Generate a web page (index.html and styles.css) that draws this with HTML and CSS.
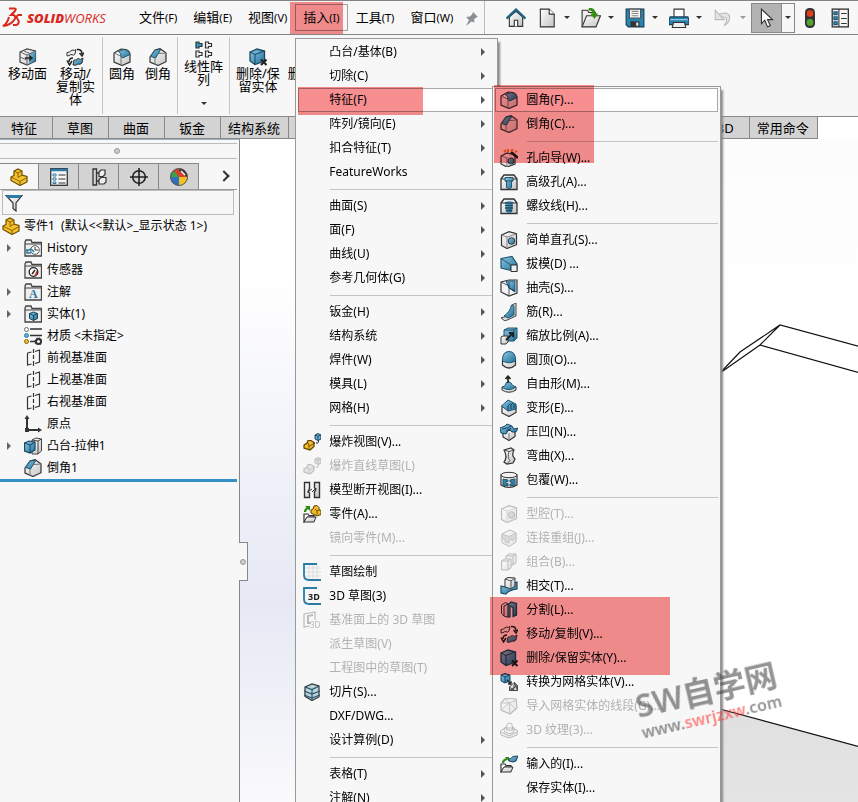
FILE: index.html
```
<!DOCTYPE html>
<html lang="zh-CN">
<head>
    <meta charset="UTF-8">
    <meta name="viewport" content="width=device-width, initial-scale=1.0">
    <title>SOLIDWORKS</title>
    <link rel="stylesheet" href="styles.css">
</head>
<body>

    <!-- Icon set -->
    <svg class="icon-set" aria-hidden="true">
        <defs>
            <linearGradient id="blue" x1="0" y1="0" x2="1" y2="1"><stop offset="0" stop-color="#8cc8e4"/><stop offset="1" stop-color="#1f6f99"/></linearGradient>
            <linearGradient id="grey" x1="0" y1="0" x2="1" y2="1"><stop offset="0" stop-color="#ffffff"/><stop offset="1" stop-color="#c4c4c4"/></linearGradient>
            <linearGradient id="face" x1="0" y1="0" x2="0" y2="1"><stop offset="0" stop-color="#e0e0e0"/><stop offset="1" stop-color="#f4f4f4"/></linearGradient>
        </defs>
        <symbol id="fillet" viewBox="0 0 18 18"><path d="M1 5 8 1 13 1.500Q17 3 17 7v7L9 17.500 1 14z" fill="url(#grey)" stroke="#333" stroke-width="1.200"/><path d="M1 5l7 3.200V17" fill="none" stroke="#777"/><path d="M8 8.500Q8.500 5 5.500 3.500L11 1.500Q16.500 2.500 17 6.500L9.500 10z" fill="url(#blue)" stroke="#23566f"/></symbol>
        <symbol id="chamfer" viewBox="0 0 18 18"><path d="M1 9 6 2 11 .700l6 4v9L9 17.500 1 14z" fill="url(#grey)" stroke="#333" stroke-width="1.200"/><path d="M6 10v7M10 5.500 17 5" fill="none" stroke="#777"/><path d="M1.500 8.500 6 2 12 1.200 6.500 10z" fill="url(#blue)" stroke="#23566f"/></symbol>
        <symbol id="box-hole" viewBox="0 0 18 18"><path d="M1.500 4 9 .700l7.500 2v11L7 17.500l-5.500-3z" fill="url(#grey)" stroke="#333" stroke-width="1.200"/><path d="M1.500 4 7 6l9.500-3M7 6v11" fill="none" stroke="#888"/><circle cx="11.500" cy="10" r="3.300" fill="url(#blue)" stroke="#333"/></symbol>
        <symbol id="hole-wizard" viewBox="0 0 18 18"><path d="M1 7l6-3 8 2v9l-8 3-6-3z" fill="url(#grey)" stroke="#333" stroke-width="1.200"/><path d="M1 7l6 2v9" fill="none" stroke="#777"/><circle cx="11" cy="12" r="3" fill="url(#blue)" stroke="#333"/><path d="M11 3l7 6" stroke="#222" stroke-width="2.600"/><path d="M4 3l2-2M8 3V0M11 2l2-2M15 3l2-1" stroke="#e88416" stroke-width="2"/></symbol>
        <symbol id="adv-hole" viewBox="0 0 18 18"><path d="M1 6 4 2h10l3 4v10.500H1z" fill="url(#grey)" stroke="#333" stroke-width="1.300"/><path d="M1 6h16" stroke="#333"/><path d="M5 4.500h8V8h-1.500v6.500L9 16l-2.500-1.500V8H5z" fill="url(#blue)" stroke="#23566f"/><path d="M5 8h8" stroke="#23566f"/></symbol>
        <symbol id="thread" viewBox="0 0 18 18"><path d="M1 6 4 2h10l3 4v10.500H1z" fill="url(#grey)" stroke="#333" stroke-width="1.300"/><path d="M1 6h16" stroke="#333"/><rect x="5.500" y="4" width="7" height="12" rx="3" fill="url(#blue)"/><path d="M5 6h8M5 8.500h8M5 11h8M6 13.500h6" stroke="#1b475e" stroke-width="1.300"/></symbol>
        <symbol id="draft" viewBox="0 0 18 18"><path d="M1 3.500 12 1.500 17 9v7H13L1 13z" fill="url(#blue)" stroke="#23566f" stroke-width="1.200"/><path d="M1 3.500 11 10h6M11 10v6" fill="none" stroke="#23566f"/><path d="M11 10h6v6.500h-6z" fill="#eee" stroke="#333"/></symbol>
        <symbol id="shell" viewBox="0 0 18 18"><path d="M1 3 9 1h8v13l-8 3-8-4z" fill="#f4f4f4" stroke="#333" stroke-width="1.200"/><path d="M6 2h9v11L9 9z" fill="url(#blue)" stroke="#23566f"/><path d="M1 3l8 4v10" fill="none" stroke="#555"/><path d="M9 3v6l6 3" fill="none" stroke="#16455d"/></symbol>
        <symbol id="rib" viewBox="0 0 18 18"><path d="M12 2l4-2v13L5 18l-4-3 9-3z" fill="url(#grey)" stroke="#444"/><path d="M4 13Q10 9 11.500 2L14 3v9l-6 3z" fill="url(#blue)" stroke="#23566f"/></symbol>
        <symbol id="scale" viewBox="0 0 18 18"><path d="M4 3 8 1h9v10l-3 3H4z" fill="url(#blue)" stroke="#23566f"/><path d="M4 3h10v11M14 3l3-2" fill="none" stroke="#23566f"/><path d="M1 10l2-1h5v6l-2 2H1z" fill="url(#grey)" stroke="#333"/><path d="M6 13l6-6M9 6h4v4" fill="none" stroke="#222" stroke-width="2"/></symbol>
        <symbol id="dome" viewBox="0 0 18 18"><path d="M2.500 9v5Q9 20 15.500 14V9z" fill="url(#grey)" stroke="#333" stroke-width="1.200"/><path d="M2.500 10Q2 .500 9 .500t6.500 9.500Q9 13.500 2.500 10z" fill="url(#blue)" stroke="#23566f"/></symbol>
        <symbol id="freeform" viewBox="0 0 18 18"><path d="M2 12v3Q9 19.500 16 15v-3z" fill="url(#grey)" stroke="#333"/><path d="M2 12.500Q6 11 6 8q3-3 5 0 1 3 5 4Q9 17 2 12.500z" fill="url(#blue)" stroke="#23566f"/><path d="M8 8V1M5.500 4 8 1.200 10.500 4" fill="none" stroke="#222" stroke-width="1.700"/></symbol>
        <symbol id="deform" viewBox="0 0 18 18"><path d="M2 7v7l7 3.500 7-4V7z" fill="url(#grey)" stroke="#333" stroke-width="1.200"/><path d="M1.500 7 8 1l8 4v5L8 12z" fill="url(#blue)" stroke="#23566f"/><path d="M8 12V7l3-3M11 10V6l2-2M14 9V5" fill="none" stroke="#16455d"/></symbol>
        <symbol id="indent" viewBox="0 0 18 18"><path d="M3 8v6l6 3.500 6-4V7z" fill="url(#grey)" stroke="#333" stroke-width="1.200"/><path d="M9 10v7" stroke="#777"/><path d="M0 5l5-2 2-2 5 2 2 3 4-1-2 4-4 0-3-3-3 5-5-1z" fill="url(#blue)" stroke="#1b475e"/><path d="M2 6l5-1 4-2M6 8l5-3" stroke="#16455d" fill="none"/></symbol>
        <symbol id="flex" viewBox="0 0 18 18"><path d="M4 3l7-2 3 2q-3 5 1 9l-2 4-6 1-3-2q4-5 0-12z" fill="url(#grey)" stroke="#333" stroke-width="1.200"/><path d="M4 3l5 1.500L14 3M9 4.500q-2 6 1 9L7 17" fill="none" stroke="#555"/></symbol>
        <symbol id="wrap" viewBox="0 0 18 18"><path d="M1 4v10q8 5 16 0V4z" fill="url(#grey)" stroke="#333" stroke-width="1.200"/><ellipse cx="9" cy="4" rx="8" ry="2.700" fill="#f2f2f2" stroke="#333"/><path d="M3 8l5 1v1.500H6v2h2V15l-5-1zM10 9l5-1v6l-5 1v-2h2v-2h-2z" fill="#2f85b3" stroke="#23566f"/></symbol>
        <symbol id="join" viewBox="0 0 18 18"><path d="M2 5l8-4 6 3v9l-7 4.500-7-4z" fill="url(#grey)" stroke="#333"/><path d="M2 9l3 2v2l4 1v-3l3-1v2l4-3V4L9 7.500 2 5z" fill="#999" stroke="#555"/></symbol>
        <symbol id="combine" viewBox="0 0 18 18"><path d="M6 3l3-2h7v9l-3 2H6z" fill="url(#grey)" stroke="#333"/><path d="M1.500 8l3-2H11v9l-3 2H1.500z" fill="url(#grey)" stroke="#333"/><path d="M1.500 8H8v9M8 8l3-2M6 3h7v9M13 3l3-2" fill="none" stroke="#333"/></symbol>
        <symbol id="intersect" viewBox="0 0 18 18"><path d="M1 9l5 1q5-4 11-5v7Q9 13 6 17l-5-1z" fill="url(#blue)" stroke="#1b475e" stroke-width="1.200"/><path d="M5 2l3-1.500L15 1v8l-4 3-6-2z" fill="url(#grey)" stroke="#333"/><path d="M5 2l6 2v8M11 4l4-3" fill="none" stroke="#555"/></symbol>
        <symbol id="split" viewBox="0 0 18 18"><path d="M1.500 4l4-2.500 3 1.500v13l-4-.5-3-3z" fill="url(#grey)" stroke="#333"/><path d="M4 5l4.500-2M4 5v10" stroke="#333"/><path d="M8 4l3-3 5.500 1.500V14L13 15.500v-9L10 5v11H8z" fill="url(#blue)" stroke="#1b475e" stroke-width="1.200"/></symbol>
        <symbol id="move-copy" viewBox="0 0 18 18"><path d="M1 4.500q3 0 5-2.500 3 1 4-.5L9 6Q8 8 5 6.500 3 8 1 8z" fill="#eee" stroke="#333"/><path d="M8 12q2 1 4-1.500 2 2 5-.5l-1 5q-2 2-4 1-2 2-5 1z" fill="url(#blue)" stroke="#333"/><path d="M11 1.500Q16 1 16 6M13.500 5 16 8l2-3.500M7 10Q3 10 3 14M1 12.500 3.500 17 6 13" fill="none" stroke="#222" stroke-width="1.500"/></symbol>
        <symbol id="delete-body" viewBox="0 0 18 18"><path d="M1 4 8 1l7.500 2v10L6 16.500 1 13z" fill="url(#blue)" stroke="#1b475e" stroke-width="1.300"/><path d="M1 4l5 2.500 9.500-3.500M6 6.500v10" fill="none" stroke="#1b475e"/><path d="M12 11.500l5.500 5.500M17.500 11.500 12 17" stroke="#222" stroke-width="2"/></symbol>
        <symbol id="to-mesh" viewBox="0 0 18 18"><path d="M1 2 5 .500 10 2v6L5 10 1 8z" fill="url(#blue)" stroke="#1b475e"/><path d="M1 2l4 2v6M5 4l5-2" fill="none" stroke="#1b475e"/><path d="M7 7l4 4M11 8v3H8" stroke="#222" fill="none" stroke-width="1.300"/><path d="M9.500 14 14 9.500l3.500 3v5h-8zM9.500 14l4 3.500 1-8 3 8M9.500 17.500l8-5" fill="#ddd" stroke="#444"/></symbol>
        <symbol id="mesh-seg" viewBox="0 0 18 18"><path d="M1 6 5 1.500 16 2l1 9-7 6-9-4z" fill="url(#grey)" stroke="#333" stroke-width="1.200"/><path d="M1 6h8l8-3M9 6l1 11M5 1.500 9 6l7 6M1 13l8-7" fill="none" stroke="#555"/></symbol>
        <symbol id="texture" viewBox="0 0 18 18"><path d="M0 10l5-3h8l5 3-1 4-8 3-8-3z" fill="url(#grey)" stroke="#333"/><path d="M4 9q0-3 2.500-3 0-4 3-4t3 4Q15 6 14 9q0 3-2.500 3Q9 14 7 12 4 12 4 9zM6.500 6v3h6V6M1 11l8 4 8-4" fill="none" stroke="#333"/></symbol>
        <symbol id="imported" viewBox="0 0 18 18"><path d="M1 17V9h4l1 1.500h5V12H4.500z" fill="#fff" stroke="#333" stroke-width="1.200"/><path d="M1 17l3-5h9l-2 5z" fill="url(#grey)" stroke="#333"/><path d="M3 8Q3 5 7 4" fill="none" stroke="#2f8a12" stroke-width="2.200"/><path d="M5 2h4v4.500z" fill="#2f8a12"/><path d="M9 4q2 0 4-2.500l5-.5-2 5-3 1-4-1z" fill="url(#blue)" stroke="#1b475e"/></symbol>
        <symbol id="part" viewBox="0 0 18 18"><path d="M1 9l3-1.500V3L8 1l4 2v4l5 1.500V14l-7 3.500-9-5z" fill="#f3c12c" stroke="#6d4c00" stroke-width="1.200"/><path d="M4 3l4 2 4-2M8 5v4.500L12 7M1 9l9 4.500 7-4M10 13.500v4" fill="none" stroke="#8a6203"/></symbol>
        <symbol id="explode" viewBox="0 0 18 18"><path d="M1 12l3-2 1-2.500h3l3 2v4L7 17l-6-2z" fill="#f0b92a" stroke="#5c4000" stroke-width="1.200"/><path d="M5 10l1 3 5-2M6 13v3" fill="none" stroke="#7d5700"/><path d="M12 2l3-1.500 3 1.500v4l-3 1.500-3-1.500zM12 2l3 1 3-1M15 3v4" fill="#63b3d6" stroke="#1b475e"/><path d="M10 10h5.500V7" fill="none" stroke="#222" stroke-dasharray="2 1"/></symbol>
        <symbol id="break-view" viewBox="0 0 18 18"><path d="M1.500 1.500h5v6L5 11l1.500 1v4.500h-5zM16.500 1.500h-5V7L13 8l-1.500 3v5.500h5z" fill="url(#grey)" stroke="#333" stroke-width="1.400"/><path d="M5 11l4-3M9 11l3-3" stroke="#333"/></symbol>
        <symbol id="insert-part" viewBox="0 0 18 18"><path d="M1 17V9h4l1 1.500h5V12H4.500z" fill="#fff" stroke="#333" stroke-width="1.200"/><path d="M1 17l3-5h9l-2 5z" fill="url(#grey)" stroke="#333"/><path d="M2 7Q2 4 5 3" fill="none" stroke="#2f8a12" stroke-width="2.200"/><path d="M2 1h5v5z" fill="#2f8a12"/><path d="M8 5l2-1 1-3 3-.5 2 2v2l2 1v4l-4 1.500L8 8z" fill="#f0b92a" stroke="#5c4000"/><path d="M12 4l2 2 3-1M14 6v4" fill="none" stroke="#7d5700"/></symbol>
        <symbol id="sketch" viewBox="0 0 18 18"><path d="M6 2v15M10 1v16M14 1v16M2 5h16M2 9h16M2 13h16" stroke="#ddd"/><path d="M14 1H1v11q0 5 5 5h12" fill="none" stroke="#2a7ba5" stroke-width="1.800"/></symbol>
        <symbol id="slicing" viewBox="0 0 18 18"><path d="M2 4l7-3 7 2v11l-7 3.500-7-4z" fill="#b9d4df" stroke="#333" stroke-width="1.200"/><path d="M2 4l7 2.500L16 3M9 6.500v11M1 8l8 3 8-3M1 12l8 3 8-3" fill="none" stroke="#285469" stroke-width="1.200"/></symbol>
        <symbol id="folder" viewBox="0 0 18 18"><path d="M1 17V3l1-2h5l1 2.500h9.500V17z" fill="#eee" stroke="#444" stroke-width="1.300"/><path d="M1 5h16" stroke="#444"/></symbol>
        <symbol id="folder-history" viewBox="0 0 18 18"><use href="#folder"/><circle cx="11" cy="11" r="4.300" fill="#fff" stroke="#555"/><path d="M11 8v3h3" fill="none" stroke="#333"/><path d="M4 12q3-4 6 1M3 10v4h4" fill="none" stroke="#2a7ba5" stroke-width="1.500"/></symbol>
        <symbol id="folder-sensor" viewBox="0 0 18 18"><use href="#folder"/><circle cx="9.500" cy="11" r="4.300" fill="#fff" stroke="#222" stroke-width="1.300"/><path d="M8 13l3-4" stroke="#222" stroke-width="1.400"/><path d="M13 9v5l-3 1z" fill="#d93a20"/></symbol>
        <symbol id="folder-solid" viewBox="0 0 18 18"><use href="#folder"/><path d="M5.500 8.500l4-1.500 4 1.500v5l-4 2-4-2z" fill="url(#blue)" stroke="#16455d"/><path d="M5.500 8.500l4 2 4-2M9.500 10.500v5" fill="none" stroke="#16455d"/></symbol>
        <symbol id="material" viewBox="0 0 18 18"><path d="M6 2h12M6 8.500h12M6 14.500h6" stroke="#333" stroke-width="1.500"/><circle cx="2.500" cy="2.500" r="2" fill="#fff" stroke="#666"/><circle cx="2.500" cy="8.500" r="2" fill="#63b3d6" stroke="#2a7ba5"/><circle cx="2.500" cy="14.500" r="2" fill="#f3c12c" stroke="#8a6203"/><circle cx="14.500" cy="14.500" r="2.500" fill="none" stroke="#333" stroke-width="2"/><circle cx="14.500" cy="14.500" r="3.700" fill="none" stroke="#333" stroke-dasharray="1.500 1.400"/></symbol>
        <symbol id="plane" viewBox="0 0 18 18"><path d="M3.500 4v12l4-1M3.500 4l4-1M11 2.500 15.500 1v12L11 14.500M9.500 0v4M9.500 6v4M9.500 12v5" fill="none" stroke="#333" stroke-width="1.200"/></symbol>
        <symbol id="origin" viewBox="0 0 18 18"><path d="M3 2v13h13" fill="none" stroke="#333" stroke-width="2"/><path d="M.500 4 3 0l2.500 4zM14 12.500l4 2.500-4 2.500z" fill="#333"/><rect x="1" y="13" width="4" height="4" fill="#333"/></symbol>
        <symbol id="extrude" viewBox="0 0 18 18"><path d="M8 3l4-2 5.500 1v12L14 17H8z" fill="url(#grey)" stroke="#444"/><path d="M14 4v13M8 3l6 1 3.500-2" fill="none" stroke="#444"/><path d="M.500 6 5 4l6 1v8l-5 3-5.500-2z" fill="url(#blue)" stroke="#1b475e" stroke-width="1.200"/><path d="M.500 6 6 8l5-3M6 8v8" fill="none" stroke="#1b475e"/></symbol>
        <symbol id="properties" viewBox="0 0 18 18"><rect x=".700" y=".700" width="16.600" height="16.600" fill="#f5f5f5" stroke="#333" stroke-width="1.300"/><path d="M.500 2h17" stroke="#2a7ba5" stroke-width="2.500"/><path d="M3 6h3v2H3zM3 10h3v2H3zM3 14h3v1.500H3z" fill="#fff" stroke="#2a7ba5"/><path d="M8.500 7h7M8.500 11h7M8.500 15h7" stroke="#333"/></symbol>
        <symbol id="config" viewBox="0 0 18 18"><path d="M3 1h3.500v16H3zM6.500 5H9M6.500 13H9" fill="none" stroke="#333" stroke-width="1.300"/><path d="M9 4l2-2h4v4.500l-2 2H9zM9 11.500l2-2h5V14l-2 2H9z" fill="#eee" stroke="#333" stroke-width="1.200"/></symbol>
        <symbol id="target" viewBox="0 0 18 18"><circle cx="9" cy="9" r="6.300" fill="none" stroke="#222" stroke-width="1.600"/><path d="M9 0v18M0 9h18" stroke="#222" stroke-width="1.600"/></symbol>
        <symbol id="ball" viewBox="0 0 18 18"><circle cx="9" cy="9" r="8.500" fill="#d8402f"/><path d="M.500 9Q0 5 3.500 2.500L9 9z" fill="#3ca34a"/><path d="M.500 9H9v8.500Q1 17 .500 9z" fill="#2f6fc0"/><path d="M9 9h8.500Q17 17 9 17.500z" fill="#f0c325"/><path d="M10 .500Q17 2 17.500 9L9 3z" fill="#3a3432"/><path d="M11 3l4 4" stroke="#fff" stroke-width="1.500"/><circle cx="9" cy="9" r="8.500" fill="none" stroke="#555"/></symbol>
        <symbol id="funnel" viewBox="0 0 18 18"><path d="M1 1.500h16L11 9v8l-3-2.500V9z" fill="url(#grey)" stroke="#333" stroke-width="1.200"/><path d="M1 1h16l-2 3H3z" fill="#2a7ba5"/></symbol>
        <symbol id="move-face" viewBox="0 0 18 18"><path d="M1 4l7-3 8.500 2v10L8 17l-7-3z" fill="url(#grey)" stroke="#444" stroke-width="1.200"/><path d="M10 6l6.500-3v10L10 16z" fill="url(#blue)"/><path d="M1 4l7 3 8.500-4M8 7v10M5 3l7 3M1 9l7 3" fill="none" stroke="#666"/><path d="M6 10h6M10 7.500l3 2.500-3 2.500" fill="none" stroke="#222" stroke-width="1.500"/></symbol>
        <symbol id="pattern" viewBox="0 0 18 18"><g fill="#eee" stroke="#333" stroke-width="1.200"><path d="M1 1h3v1.500h3v3H4V7H1z" fill="#2f9cc8"/><path d="M10.500 1h3v1.500h3v3h-3V7h-3zM1 10h3v1.500h3v3H4V16H1zM10.500 10h3v1.500h3v3h-3V16h-3z"/></g></symbol>
        <symbol id="pin" viewBox="0 0 18 18"><path d="M10 3l5 5-2 .500-2 2 .500 3-3-1L3 17l3-6-3-3 4-.500 2-2z" fill="#8b8f92"/></symbol>
        <symbol id="home" viewBox="0 0 18 18"><path d="M3 8v8.500h12V8L9 3z" fill="url(#grey)" stroke="#333"/><path d="M7.500 16.500V11h3v5.500" fill="#fff" stroke="#333"/><path d="M.500 9.500 9 1.500l8.500 8" fill="none" stroke="#1f5f80" stroke-width="2.200"/></symbol>
        <symbol id="new" viewBox="0 0 18 18"><path d="M3 1h8l4.500 4.500V17H3z" fill="url(#grey)" stroke="#333"/><path d="M11 1v4.500h4.500" fill="#fff" stroke="#333"/></symbol>
        <symbol id="open" viewBox="0 0 18 18"><path d="M1 17V2h5l1 2h6v4" fill="#eee" stroke="#333"/><path d="M1 17 5 7h12.500l-4 10z" fill="url(#grey)" stroke="#333"/><path d="M7 1q5 0 5 5" fill="none" stroke="#388e0e" stroke-width="2.600"/><path d="M8.500 5h7L12 10z" fill="#388e0e"/></symbol>
        <symbol id="save" viewBox="0 0 18 18"><path d="M1 1h16v16H3l-2-2z" fill="#2a82ae" stroke="#173f55"/><path d="M4 1h10v8H4z" fill="#f3f3f3" stroke="#555"/><path d="M6 3h6M6 5h6M6 7h6" stroke="#888"/><path d="M5 12h8v5H5z" fill="#333"/><path d="M10 13h2v3h-2z" fill="#ddd"/></symbol>
        <symbol id="print" viewBox="0 0 18 18"><path d="M4.500 8V1h9v7" fill="#fff" stroke="#333"/><path d="M1 8h16l1 3v4H0v-4z" fill="#2a82ae" stroke="#173f55"/><path d="M1 10.500h16" stroke="#9ad0e8"/><path d="M4 13h10l1 4.500H3z" fill="#eee" stroke="#333"/></symbol>
        <symbol id="undo" viewBox="0 0 18 18"><path d="M4 6q11-4 11 3 0 4-5 7 3-4 2-6.500Q10 7 5 9z" fill="#e4e4e4" stroke="#bbb"/><path d="M2 2v8.500h8z" fill="#e4e4e4" stroke="#bbb"/></symbol>
        <symbol id="cursor" viewBox="0 0 18 18"><path d="M4 1v13l3-3 2.500 6 2.500-1-2.500-5.500H14z" fill="#fff" stroke="#333"/></symbol>
        <symbol id="light" viewBox="0 0 18 18"><rect x="4.500" y="0" width="9" height="18" rx="4" fill="#333"/><circle cx="9" cy="5" r="3" fill="#e23b1c"/><circle cx="9" cy="13" r="3" fill="#55a630"/></symbol>
        <symbol id="options" viewBox="0 0 18 18"><rect x="2" y="1" width="14.500" height="16" fill="#f5f5f5" stroke="#333" stroke-width="1.200"/><path d="M8 1v16" stroke="#333"/><path d="M3.500 3.500H6.500V6H3.500zM3.500 8H6.500v2.500H3.500zM3.500 12.500H6.500V15H3.500z" fill="#3590bd" stroke="#1b5877"/><path d="M10 5h5M10 9.500h5M10 14h5" stroke="#333"/></symbol>
    </svg>

    <!-- Title Bar -->
    <header class="title-bar">
        <div class="brand">
            <svg class="brand-mark" viewBox="0 0 21 21" aria-hidden="true">
                <path d="M7 1.500h5q3 0 1 2.500L9 8h2.500q3 1 1 4.500Q9 18 1 19q4-2 6-9M20 8h-3.500q-3 1-1 4 3 4-1 6H11" fill="none" stroke="#d9281e" stroke-width="2"/>
            </svg>
            <span class="brand-name"><b>SOLID</b>WORKS</span>
        </div>
        <nav>
            <ul class="menu-bar">
                <li><button>文件<span>(F)</span></button></li>
                <li><button>编辑<span>(E)</span></button></li>
                <li><button>视图<span>(V)</span></button></li>
                <li class="open">
                    <button>插入<span>(I)</span></button>
                    <div class="mark mark-insert"></div>

                    <!-- Insert Menu -->
                    <ul class="menu insert-menu">
                        <li><button class="has-sub">凸台/基体(B)</button></li>
                        <li><button class="has-sub">切除(C)</button></li>
                        <li class="open">
                            <button class="has-sub active">特征(F)</button>
                            <div class="mark mark-feature"></div>

                            <!-- Features Submenu -->
                            <ul class="menu feature-menu">
                                <li><button class="active"><svg><use href="#fillet"/></svg>圆角(F)...</button></li>
                                <li><button><svg><use href="#chamfer"/></svg>倒角(C)...</button></li>
                                <li class="line"></li>
                                <li><button><svg><use href="#hole-wizard"/></svg>孔向导(W)...</button></li>
                                <li><button><svg><use href="#adv-hole"/></svg>高级孔(A)...</button></li>
                                <li><button><svg><use href="#thread"/></svg>螺纹线(H)...</button></li>
                                <li class="line"></li>
                                <li><button><svg><use href="#box-hole"/></svg>简单直孔(S)...</button></li>
                                <li><button><svg><use href="#draft"/></svg>拔模(D) ...</button></li>
                                <li><button><svg><use href="#shell"/></svg>抽壳(S)...</button></li>
                                <li><button><svg><use href="#rib"/></svg>筋(R)...</button></li>
                                <li><button><svg><use href="#scale"/></svg>缩放比例(A)...</button></li>
                                <li><button><svg><use href="#dome"/></svg>圆顶(O)...</button></li>
                                <li><button><svg><use href="#freeform"/></svg>自由形(M)...</button></li>
                                <li><button><svg><use href="#deform"/></svg>变形(E)...</button></li>
                                <li><button><svg><use href="#indent"/></svg>压凹(N)...</button></li>
                                <li><button><svg><use href="#flex"/></svg>弯曲(X)...</button></li>
                                <li><button><svg><use href="#wrap"/></svg>包覆(W)...</button></li>
                                <li class="line"></li>
                                <li><button disabled><svg><use href="#box-hole"/></svg>型腔(T)...</button></li>
                                <li><button disabled><svg><use href="#join"/></svg>连接重组(J)...</button></li>
                                <li><button disabled><svg><use href="#combine"/></svg>组合(B)...</button></li>
                                <li><button><svg><use href="#intersect"/></svg>相交(T)...</button></li>
                                <li><button><svg><use href="#split"/></svg>分割(L)...</button></li>
                                <li><button><svg><use href="#move-copy"/></svg>移动/复制(V)...</button></li>
                                <li><button><svg><use href="#delete-body"/></svg>删除/保留实体(Y)...</button></li>
                                <li><button><svg><use href="#to-mesh"/></svg>转换为网格实体(V)...</button></li>
                                <li><button disabled><svg><use href="#mesh-seg"/></svg>导入网格实体的线段(G)...</button></li>
                                <li><button disabled><svg><use href="#texture"/></svg>3D 纹理(3)...</button></li>
                                <li class="line"></li>
                                <li><button><svg><use href="#imported"/></svg>输入的(I)...</button></li>
                                <li><button>保存实体(I)...</button></li>
                            </ul>
                            <div class="mark mark-fillet"></div>
                            <div class="mark mark-bodies"></div>
                        </li>
                        <li><button class="has-sub">阵列/镜向(E)</button></li>
                        <li><button class="has-sub">扣合特征(T)</button></li>
                        <li><button class="has-sub">FeatureWorks</button></li>
                        <li class="line"></li>
                        <li><button class="has-sub">曲面(S)</button></li>
                        <li><button class="has-sub">面(F)</button></li>
                        <li><button class="has-sub">曲线(U)</button></li>
                        <li><button class="has-sub">参考几何体(G)</button></li>
                        <li class="line"></li>
                        <li><button class="has-sub">钣金(H)</button></li>
                        <li><button class="has-sub">结构系统</button></li>
                        <li><button class="has-sub">焊件(W)</button></li>
                        <li><button class="has-sub">模具(L)</button></li>
                        <li><button class="has-sub">网格(H)</button></li>
                        <li class="line"></li>
                        <li><button><svg><use href="#explode"/></svg>爆炸视图(V)...</button></li>
                        <li><button disabled><svg><use href="#explode"/></svg>爆炸直线草图(L)</button></li>
                        <li><button><svg><use href="#break-view"/></svg>模型断开视图(I)...</button></li>
                        <li><button><svg><use href="#insert-part"/></svg>零件(A)...</button></li>
                        <li><button disabled>镜向零件(M)...</button></li>
                        <li class="line"></li>
                        <li><button><svg><use href="#sketch"/></svg>草图绘制</button></li>
                        <li><button><svg viewBox="0 0 18 18"><path d="M14 1H1v11q0 5 5 5h12" fill="none" stroke="#2a7ba5" stroke-width="1.800"/><text x="5" y="13" class="icon-3d">3D</text></svg>3D 草图(3)</button></li>
                        <li><button disabled><svg viewBox="0 0 18 18"><path d="M1 3l11-2v8M1 3v13l6-1" fill="none" stroke="#333" stroke-width="1.200"/><path d="M10 4 5 5v7h3" fill="none" stroke="#333" stroke-width="2"/><text x="7" y="17" class="icon-3d thin">3D</text></svg>基准面上的 3D 草图</button></li>
                        <li><button disabled>派生草图(V)</button></li>
                        <li><button disabled>工程图中的草图(T)</button></li>
                        <li><button><svg><use href="#slicing"/></svg>切片(S)...</button></li>
                        <li><button>DXF/DWG...</button></li>
                        <li><button class="has-sub">设计算例(D)</button></li>
                        <li class="line"></li>
                        <li><button class="has-sub">表格(T)</button></li>
                        <li><button class="has-sub">注解(N)</button></li>
                    </ul>
                </li>
                <li><button>工具<span>(T)</span></button></li>
                <li><button>窗口<span>(W)</span></button></li>
            </ul>
        </nav>
        <button class="pin" aria-label="固定"><svg><use href="#pin"/></svg></button>
        <div class="quick-bar">
            <button class="quick" aria-label="主页"><svg><use href="#home"/></svg></button>
            <button class="quick drop" aria-label="新建"><svg><use href="#new"/></svg></button>
            <button class="quick drop" aria-label="打开"><svg><use href="#open"/></svg></button>
            <button class="quick drop" aria-label="保存"><svg><use href="#save"/></svg></button>
            <button class="quick drop" aria-label="打印"><svg><use href="#print"/></svg></button>
            <button class="quick drop" aria-label="撤消" disabled><svg><use href="#undo"/></svg></button>
            <div class="select-tool">
                <button class="select-main" aria-label="选择"><svg><use href="#cursor"/></svg></button>
                <button class="select-drop" aria-label="选择选项"></button>
            </div>
            <button class="quick" aria-label="重建模型"><svg><use href="#light"/></svg></button>
            <button class="quick" aria-label="选项"><svg><use href="#options"/></svg></button>
        </div>
    </header>

    <!-- Ribbon -->
    <section class="ribbon">
        <div class="ribbon-group">
            <button class="tool"><svg><use href="#move-face"/></svg>移动面</button>
            <button class="tool"><svg><use href="#move-copy"/></svg>移动/<br>复制实<br>体</button>
        </div>
        <div class="ribbon-group narrow">
            <button class="tool"><svg><use href="#fillet"/></svg>圆角</button>
            <button class="tool"><svg><use href="#chamfer"/></svg>倒角</button>
        </div>
        <div class="ribbon-group high">
            <button class="tool drop-down"><svg><use href="#pattern"/></svg>线性阵<br>列</button>
        </div>
        <div class="ribbon-group last">
            <button class="tool"><svg><use href="#delete-body"/></svg>删除/保<br>留实体</button>
            <button class="tool cut">删除</button>
        </div>
    </section>

    <!-- Command Tabs -->
    <div class="tabs">
        <button>特征</button>
        <button>草图</button>
        <button>曲面</button>
        <button>钣金</button>
        <button class="wide">结构系统</button>
        <div class="tabs-rest"></div>
        <button>MBD</button>
        <button class="wide">常用命令</button>
    </div>

    <main class="workspace">
        <!-- Feature Manager -->
        <aside class="panel">
            <div class="grip"></div>
            <div class="panel-tabs">
                <button class="current" aria-label="设计树"><svg><use href="#part"/></svg></button>
                <button aria-label="属性"><svg><use href="#properties"/></svg></button>
                <button aria-label="配置"><svg><use href="#config"/></svg></button>
                <button aria-label="尺寸"><svg><use href="#target"/></svg></button>
                <button aria-label="外观"><svg><use href="#ball"/></svg></button>
                <button class="more" aria-label="更多"></button>
            </div>
            <label class="filter"><svg><use href="#funnel"/></svg><input type="text" aria-label="过滤"></label>
            <ul class="tree">
                <li class="root"><svg><use href="#part"/></svg>零件1&nbsp; (默认&lt;&lt;默认&gt;_显示状态 1&gt;)</li>
                <li class="parent"><svg><use href="#folder-history"/></svg>History</li>
                <li><svg><use href="#folder-sensor"/></svg>传感器</li>
                <li class="parent"><svg viewBox="0 0 18 18"><use href="#folder"/><text x="5" y="15" class="icon-a">A</text></svg>注解</li>
                <li class="parent"><svg><use href="#folder-solid"/></svg>实体(1)</li>
                <li><svg><use href="#material"/></svg>材质 &lt;未指定&gt;</li>
                <li><svg><use href="#plane"/></svg>前视基准面</li>
                <li><svg><use href="#plane"/></svg>上视基准面</li>
                <li><svg><use href="#plane"/></svg>右视基准面</li>
                <li><svg><use href="#origin"/></svg>原点</li>
                <li class="parent"><svg><use href="#extrude"/></svg>凸台-拉伸1</li>
                <li><svg><use href="#chamfer"/></svg>倒角1</li>
            </ul>
            <div class="rollback"></div>
            <div class="splitter"></div>
        </aside>

        <!-- Model View -->
        <section class="view">
            <svg class="model" viewBox="240 139 1200 1000">
                <path d="M722 371 780 325 1440 503V902L722 709z" fill="#fff"/>
                <path d="M722 709 1440 904V1139H722z" fill="url(#face)"/>
                <path d="M720 373 740 352 780 325 1440 503M720 373 760 345 780 325M760 345 1440 535M720 709 1440 904" fill="none" stroke="#111" stroke-width="1.200"/>
            </svg>
        </section>
    </main>

    <div class="watermark">
        <div class="watermark-name">SW自学网</div>
        <div class="watermark-url">www.<span>swrjzxw</span>.com</div>
    </div>

</body>
</html>
```
FILE: styles.css
```
* {
    box-sizing: border-box;
}

body {
    margin: 0;
    height: 100vh;
    display: flex;
    flex-direction: column;
    overflow: hidden;
    position: relative;
    background-color: #f7f7f7;
    color: #000;
    font-family: "Noto Sans", "Noto Sans CJK SC", sans-serif;
    font-size: 12px;
}

button {
    border: none;
    background: none;
    padding: 0;
    margin: 0;
    color: inherit;
    font: inherit;
}

ul {
    list-style: none;
    margin: 0;
    padding: 0;
}

svg {
    width: 18px;
    height: 18px;
    flex: none;
    display: block;
}

.icon-set {
    position: absolute;
    width: 0;
    height: 0;
}

.icon-3d {
    font: bold 9px "Noto Sans", sans-serif;
    fill: #222;
}

.icon-3d.thin {
    font-weight: normal;
    font-size: 8px;
}

.icon-a {
    font: bold 12px "Liberation Serif", serif;
    fill: #2a7ba5;
}

/* Title bar */
.title-bar {
    flex: none;
    height: 35px;
    display: flex;
    align-items: center;
    border-top: 1px solid #848484;
    border-bottom: 1px solid #848484;
}

.brand {
    width: 131px;
    display: flex;
    align-items: center;
    gap: 4px;
    padding-left: 2px;
}

.brand-mark {
    width: 21px;
    height: 21px;
}

.brand-name {
    color: #d9281e;
    font-family: "Open Sans", sans-serif;
    font-style: italic;
    font-size: 13px;
}

.brand-name b {
    font-weight: 800;
}

.menu-bar {
    display: flex;
}

.menu-bar > li {
    position: relative;
}

.menu-bar > li > button {
    height: 27px;
    padding: 0 7px;
    border: 1px solid transparent;
    font-size: 13px;
    line-height: 24px;
    white-space: nowrap;
}

.menu-bar > li > button span {
    font-size: 11px;
}

.menu-bar > .open > button {
    border-color: #a0a0a0;
}

.pin {
    margin-left: 2px;
}

.quick-bar {
    align-self: stretch;
    margin-left: auto;
    width: 374px;
    display: flex;
    align-items: center;
    padding-left: 16px;
    border-left: 1px solid #bbb;
}

.quick {
    width: 30px;
    display: flex;
    align-items: center;
    justify-content: center;
}

.quick svg {
    width: 20px;
    height: 20px;
}

.quick.drop {
    width: 44px;
    gap: 7px;
}

.quick.drop::after,
.select-drop::after,
.drop-down::after {
    content: "";
    border: 3px solid transparent;
    border-top-color: #333;
    border-bottom: none;
}

.quick:disabled::after {
    border-top-color: #999;
}

.select-tool {
    display: flex;
    height: 30px;
    border: 1px solid #888;
}

.select-main {
    width: 30px;
    background-color: #b3b3b3;
    border-right: 1px solid #888;
    display: flex;
    align-items: center;
    justify-content: center;
}

.select-main svg {
    width: 20px;
    height: 20px;
}

.select-drop {
    width: 12px;
    display: flex;
    align-items: center;
    justify-content: center;
}

/* Menus */
.menu {
    position: absolute;
    z-index: 10;
    padding: 1px 0 20px;
    background-color: #f7f7f7;
    border: 1px solid #999;
    box-shadow: 2px 4px 2px #8a8a8a;
}

.insert-menu {
    top: 34px;
    left: 0;
    width: 203px;
}

.feature-menu {
    top: -2px;
    left: 196px;
    width: 229px;
}

.menu > .open {
    position: relative;
}

.menu button {
    display: flex;
    align-items: center;
    gap: 8px;
    width: calc(100% - 4px);
    height: 24px;
    margin: 0 2px;
    padding-left: 4px;
    border: 1px solid transparent;
    line-height: 22px;
    white-space: nowrap;
    text-align: left;
}

.menu button:not(:has(svg)) {
    padding-left: 30px;
}

.menu button.active {
    background-color: #fff;
    border-color: #a8a8a8;
}

.menu button:disabled {
    color: #b2b2b2;
}

.menu button:disabled svg {
    filter: grayscale(1);
    opacity: 0.3;
}

.has-sub::after {
    content: "";
    margin-left: auto;
    margin-right: 9px;
    border: 4px solid transparent;
    border-left-color: #555;
    border-right: none;
}

.line {
    height: 1px;
    margin: 5px 2px 4px 34px;
    background-color: #c4c4c4;
}

/* Highlight marks */
.mark {
    position: absolute;
    z-index: 20;
    background-color: #f78e90;
    mix-blend-mode: multiply;
    pointer-events: none;
}

.mark-insert {
    top: -2px;
    left: -5px;
    width: 53px;
    height: 32px;
}

.mark-feature {
    top: -1px;
    left: 2px;
    width: 125px;
    height: 28px;
    z-index: 5;
}

.mark-fillet {
    top: -3px;
    left: 198px;
    width: 100px;
    height: 78px;
}

.mark-bodies {
    top: 509px;
    left: 194px;
    width: 180px;
    height: 78px;
}

/* Ribbon */
.ribbon {
    flex: none;
    height: 81px;
    display: flex;
    padding: 2px 0;
}

.ribbon-group {
    width: 103px;
    display: flex;
    justify-content: space-between;
    padding: 11px 7px 0 8px;
    border-right: 1px solid #c4c4c4;
}

.ribbon-group.narrow {
    width: 75px;
    padding: 11px 6px 0;
}

.ribbon-group.high {
    width: 52px;
    padding: 4px 6px 0;
}

.ribbon-group.last {
    width: auto;
    gap: 8px;
    padding: 11px 0 0 6px;
    border-right: none;
}

.tool {
    display: flex;
    flex-direction: column;
    align-items: center;
    font-size: 13px;
    line-height: 13px;
    white-space: nowrap;
    align-self: flex-start;
}

.tool svg {
    margin-bottom: 1px;
}

.tool.cut {
    padding-top: 19px;
}

.drop-down::after {
    margin-top: 16px;
}

/* Command tabs */
.tabs {
    flex: none;
    height: 23px;
    display: flex;
    background-color: #fff;
    border-top: 1px solid #888;
}

.tabs button,
.tabs-rest {
    flex: none;
    padding: 0 15px 0 14px;
    background-color: #d3d3d3;
    border-right: 1px solid #888;
    border-bottom: 1px solid #888;
    font-size: 13px;
    line-height: 20px;
}

.tabs button:first-child {
    padding-left: 11px;
}

.tabs .wide {
    padding: 0 8px 0 7px;
}

.tabs-rest {
    width: 401px;
}

/* Feature manager */
.workspace {
    flex: 1;
    display: flex;
    min-height: 0;
}

.panel {
    flex: none;
    width: 240px;
    position: relative;
    padding-right: 2px;
    border-right: 1px solid #888;
    border-top: 1px solid #9db4be;
    background-color: #f7f7f7;
}

.grip {
    height: 16px;
    margin-top: 3px;
    padding-right: 3px;
    border-top: 1px solid #bbb;
    border-bottom: 1px solid #bbb;
    display: flex;
    align-items: center;
    justify-content: center;
}

.grip::before,
.splitter::before {
    content: "";
    width: 4px;
    height: 4px;
    border-radius: 50%;
    border: 1px solid #999;
    background-color: #ccc;
}

.panel-tabs {
    display: flex;
    height: 27px;
    margin-top: 4px;
    border-bottom: 1px solid #999;
}

.panel-tabs button {
    width: 40px;
    display: flex;
    align-items: center;
    justify-content: center;
    background-color: #d3d3d3;
    border-top: 1px solid #888;
    border-right: 1px solid #888;
}

.panel-tabs .current {
    width: 39px;
    background-color: #f7f7f7;
}

.panel-tabs .more {
    margin-left: auto;
    width: 26px;
    background: none;
    border: none;
}

.more::before {
    content: "";
    width: 6px;
    height: 6px;
    border-top: 2px solid #333;
    border-right: 2px solid #333;
    transform: rotate(45deg);
}

.filter {
    display: flex;
    align-items: center;
    height: 25px;
    margin: 0 3px 0 2px;
    padding-left: 2px;
    border: 1px solid #bbb;
}

.filter input {
    flex: 1;
    min-width: 0;
    border: none;
    background: none;
    outline: none;
}

.tree li {
    display: flex;
    align-items: center;
    gap: 5px;
    height: 22px;
    padding-left: 24px;
    line-height: 22px;
    white-space: nowrap;
}

.tree .root {
    gap: 4px;
    padding-left: 2px;
}

.tree .parent {
    padding-left: 7px;
}

.tree .parent::before {
    content: "";
    margin-right: 8px;
    border: 4px solid transparent;
    border-left-color: #666;
    border-right: none;
}

.rollback {
    height: 3px;
    background-color: #3590c5;
}

.splitter {
    position: absolute;
    top: 402px;
    right: -9px;
    width: 9px;
    height: 39px;
    display: flex;
    align-items: center;
    justify-content: center;
    background-color: #f7f7f7;
    border: 1px solid #888;
    border-left: none;
    z-index: 1;
}

/* Model view */
.view {
    flex: 1;
    position: relative;
    overflow: hidden;
    background: linear-gradient(#ffffff 20%, #e6e9f4 70%, #fafafc);
}

.view::before {
    content: "";
    position: absolute;
    inset: 0 0 0 40%;
    background: linear-gradient(#fcfcfd, #ffffff 30%);
}

.model {
    position: absolute;
    top: 0;
    left: 0;
    width: 1200px;
    height: 1000px;
}

/* Watermark */
.watermark {
    position: absolute;
    top: 672px;
    left: 636px;
    z-index: 30;
    transform: rotate(-13deg);
    color: rgba(60, 60, 60, 0.55);
    font-weight: 600;
    white-space: nowrap;
    pointer-events: none;
}

.watermark-name {
    font-size: 32px;
    line-height: 36px;
}

.watermark-url {
    font-size: 16px;
    line-height: 18px;
}

.watermark-url span {
    color: rgba(255, 60, 60, 0.6);
}
```
